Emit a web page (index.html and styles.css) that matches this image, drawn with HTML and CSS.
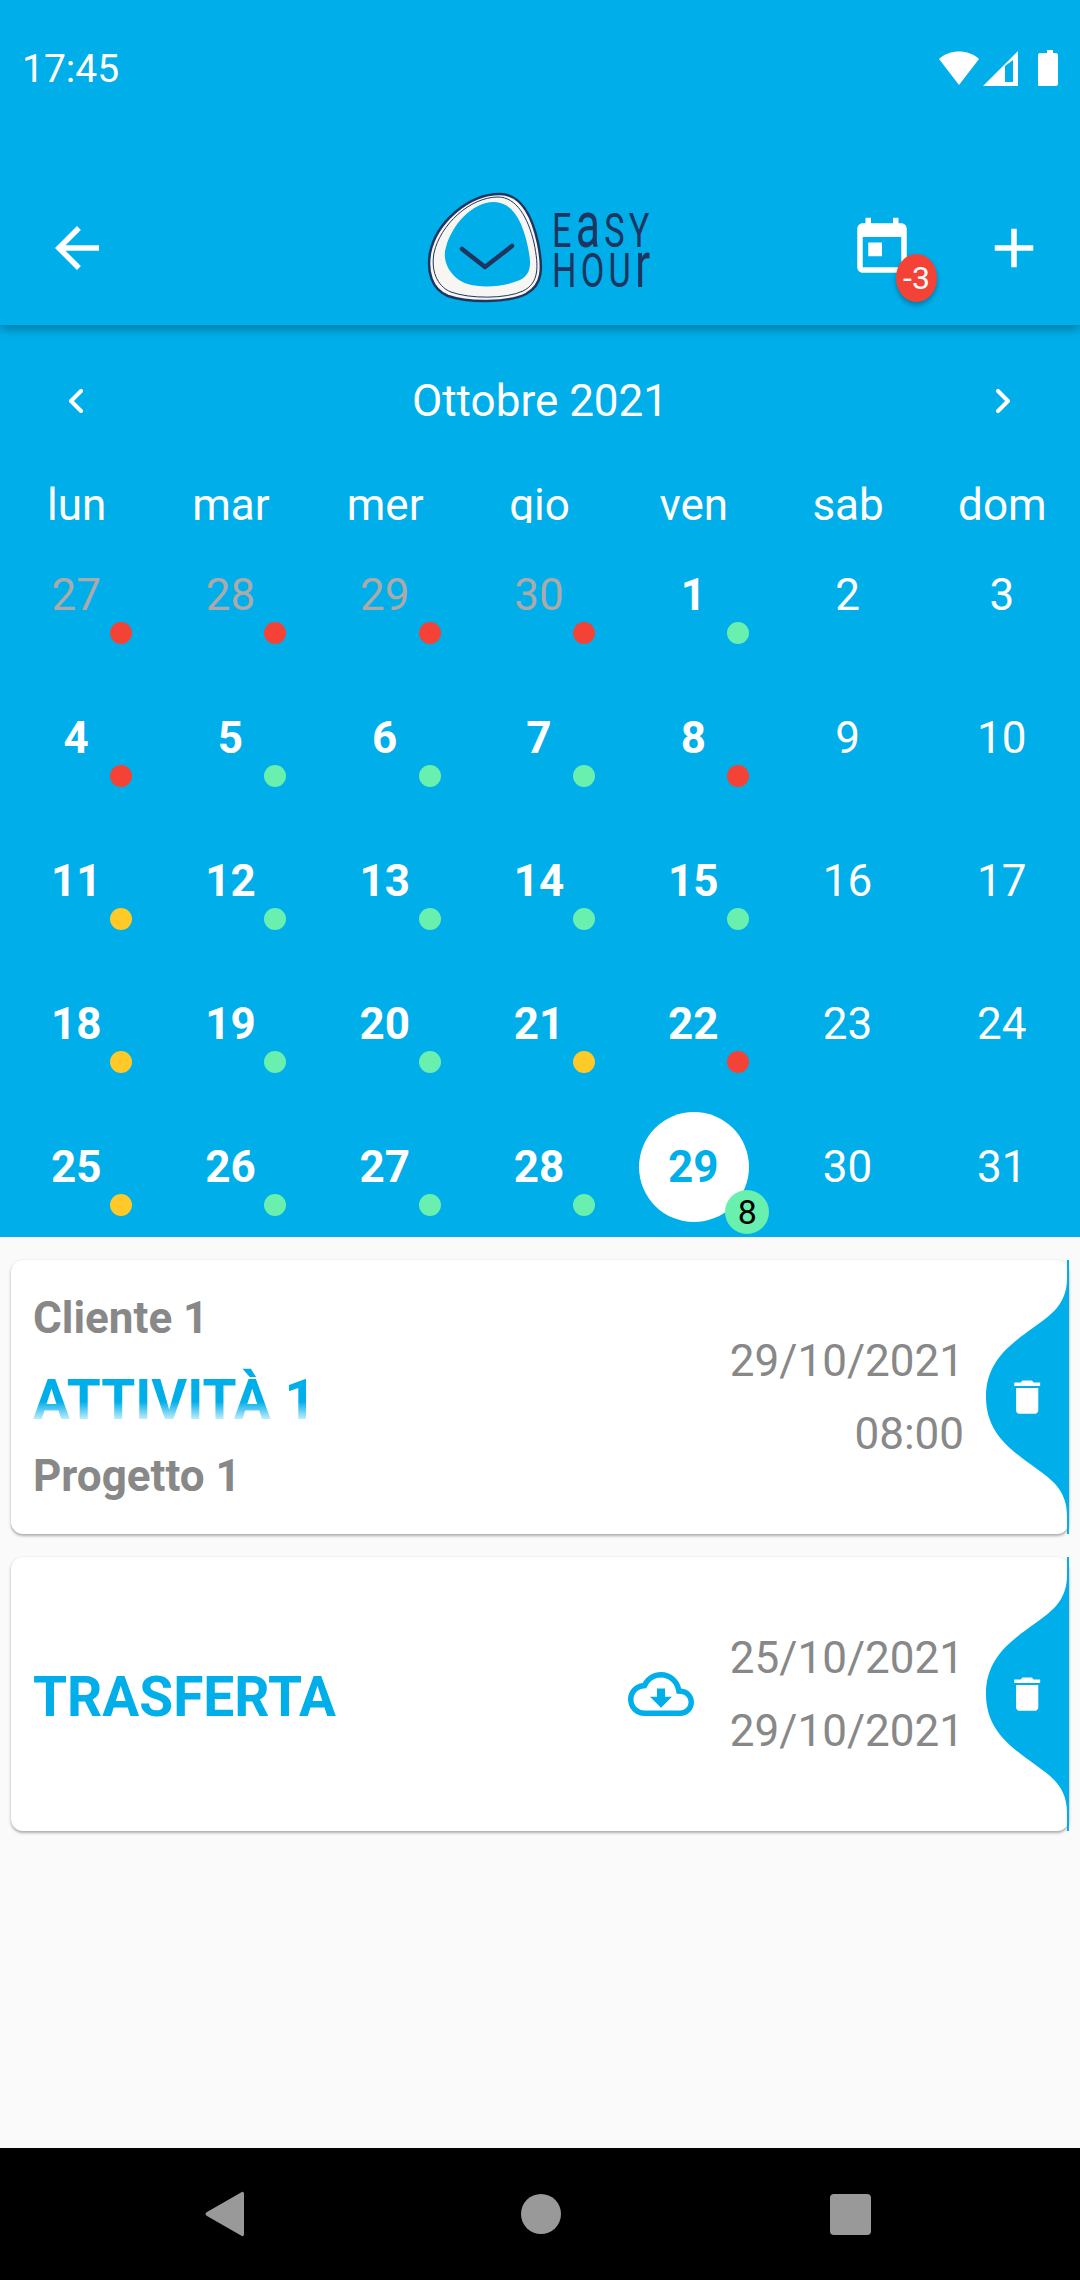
FILE: index.html
```html
<!DOCTYPE html>
<html lang="it">
  <head>
    <meta charset="UTF-8" />
    <meta name="viewport" content="width=device-width, initial-scale=1.0" />
    <title>Easy Hour</title>
    <link rel="stylesheet" href="styles.css">
  </head>
  <body>
    <header class="Header">
      <div class="StatusBar">
        <span class="StatusTime">17:45</span>
        <svg class="StatusIcons" width="120" height="36" viewBox="0 0 120 36">
          <path d="M0 9C10 -1 30 -1 40 9L20 35Z" fill="#fff" />
          <path fill-rule="evenodd" d="M79 1V36H44ZM66 16V32H74V10Z" fill="#fff" />
          <path d="M105 3H108V0H114V3H117C118 3 119 4 119 5V34C119 35 118 36 117 36H100C99 36 99 35 99 34V5C99 4 100 3 101 3Z" fill="#fff" />
        </svg>
      </div>
      <div class="Toolbar">
        <svg class="ToolIcon ToolBack" viewBox="0 0 24 24">
          <path d="M20 11H7.83l5.59-5.59L12 4l-8 8 8 8 1.41-1.41L7.83 13H20v-2z" />
        </svg>
        <svg class="Logo" width="224" height="110" viewBox="0 0 224 110">
          <path class="LogoEgg" d="M72 1C92 1 104 22 110 50C115 75 115 92 98 101C80 110 40 110 20 103C3 96 -1 78 2 60C8 30 40 1 72 1Z" />
          <path class="LogoLine" d="M70 4C88 4 100 24 106 50C111 74 111 90 95 98C78 106 42 106 23 99C8 93 3 76 6 60C12 32 42 4 70 4Z" />
          <path class="LogoFace" d="M66 9C84 9 94 28 99 50C103 68 105 80 92 87C76 94 46 97 31 87C20 79 14 66 18 54C24 32 44 9 66 9Z" />
          <path class="LogoCheck" d="M34 56L57 74L84 53" />
          <text class="LogoText" transform="translate(124 54) scale(.7 1)">E<tspan class="LogoLower">a</tspan>SY</text>
          <text class="LogoText" transform="translate(124 94) scale(.7 1)">HOU<tspan class="LogoLower">r</tspan></text>
        </svg>
        <div class="ToolRight">
          <div class="TodayBtn">
            <svg class="ToolIcon" viewBox="0 0 24 24">
              <path d="M19 3h-1V1h-2v2H8V1H6v2H5c-1.11 0-1.99.9-1.99 2L3 19c0 1.1.89 2 2 2h14c1.1 0 2-.9 2-2V5c0-1.1-.9-2-2-2zm0 16H5V8h14v11zM7 10h5v5H7z" />
            </svg>
            <span class="TodayBadge">-3</span>
          </div>
          <svg class="ToolIcon" viewBox="0 0 24 24">
            <path d="M19 13h-6v6h-2v-6H5v-2h6V5h2v6h6v2z" />
          </svg>
        </div>
      </div>
    </header>

    <section class="Calendar">
      <div class="MonthRow">
        <svg class="Chevron" width="154" height="24" viewBox="0 0 154 24"><path d="M81 2L71 12L81 22" /></svg>
        <span class="MonthName">Ottobre 2021</span>
        <svg class="Chevron" width="154" height="24" viewBox="0 0 154 24"><path d="M72 2L82 12L72 22" /></svg>
      </div>
      <div class="WeekRow">
        <span>lun</span><span>mar</span><span>mer</span><span>gio</span><span>ven</span><span>sab</span><span>dom</span>
      </div>
      <div class="DayGrid">
        <div class="Day Muted"><span class="Num">27</span><i class="Dot Red"></i></div>
        <div class="Day Muted"><span class="Num">28</span><i class="Dot Red"></i></div>
        <div class="Day Muted"><span class="Num">29</span><i class="Dot Red"></i></div>
        <div class="Day Muted"><span class="Num">30</span><i class="Dot Red"></i></div>
        <div class="Day Work"><span class="Num">1</span><i class="Dot Green"></i></div>
        <div class="Day"><span class="Num">2</span></div>
        <div class="Day"><span class="Num">3</span></div>

        <div class="Day Work"><span class="Num">4</span><i class="Dot Red"></i></div>
        <div class="Day Work"><span class="Num">5</span><i class="Dot Green"></i></div>
        <div class="Day Work"><span class="Num">6</span><i class="Dot Green"></i></div>
        <div class="Day Work"><span class="Num">7</span><i class="Dot Green"></i></div>
        <div class="Day Work"><span class="Num">8</span><i class="Dot Red"></i></div>
        <div class="Day"><span class="Num">9</span></div>
        <div class="Day"><span class="Num">10</span></div>

        <div class="Day Work"><span class="Num">11</span><i class="Dot Yellow"></i></div>
        <div class="Day Work"><span class="Num">12</span><i class="Dot Green"></i></div>
        <div class="Day Work"><span class="Num">13</span><i class="Dot Green"></i></div>
        <div class="Day Work"><span class="Num">14</span><i class="Dot Green"></i></div>
        <div class="Day Work"><span class="Num">15</span><i class="Dot Green"></i></div>
        <div class="Day"><span class="Num">16</span></div>
        <div class="Day"><span class="Num">17</span></div>

        <div class="Day Work"><span class="Num">18</span><i class="Dot Yellow"></i></div>
        <div class="Day Work"><span class="Num">19</span><i class="Dot Green"></i></div>
        <div class="Day Work"><span class="Num">20</span><i class="Dot Green"></i></div>
        <div class="Day Work"><span class="Num">21</span><i class="Dot Yellow"></i></div>
        <div class="Day Work"><span class="Num">22</span><i class="Dot Red"></i></div>
        <div class="Day"><span class="Num">23</span></div>
        <div class="Day"><span class="Num">24</span></div>

        <div class="Day Work"><span class="Num">25</span><i class="Dot Yellow"></i></div>
        <div class="Day Work"><span class="Num">26</span><i class="Dot Green"></i></div>
        <div class="Day Work"><span class="Num">27</span><i class="Dot Green"></i></div>
        <div class="Day Work"><span class="Num">28</span><i class="Dot Green"></i></div>
        <div class="Day Work Selected"><span class="Num">29</span><b class="CountBadge">8</b></div>
        <div class="Day"><span class="Num">30</span></div>
        <div class="Day"><span class="Num">31</span></div>
      </div>
    </section>

    <main class="CardList">
      <article class="Card">
        <div class="CardMain">
          <p class="CardSub">Cliente 1</p>
          <p class="CardTitle Faded">ATTIVITÀ 1</p>
          <p class="CardSub">Progetto 1</p>
        </div>
        <div class="CardDates">
          <span>29/10/2021</span>
          <span>08:00</span>
        </div>
        <svg class="Wave" width="85" height="274" viewBox="0 0 85 274">
          <path d="M83 0V18C83 42 70 53 53 65C28 83 2 100 2 137C2 174 28 191 53 209C70 221 83 232 83 256V274H85V0Z" />
          <path class="Trash" transform="translate(21 115) scale(1.85)" d="M6 19c0 1.1.9 2 2 2h8c1.1 0 2-.9 2-2V7H6v12zM19 4h-3.5l-1-1h-5l-1 1H5v2h14V4z" />
        </svg>
      </article>

      <article class="Card">
        <div class="CardMain">
          <p class="CardTitle Solo">TRASFERTA</p>
        </div>
        <svg class="Cloud" width="66" height="66" viewBox="0 0 24 24">
          <path d="M19.35 10.04C18.67 6.59 15.64 4 12 4 9.11 4 6.6 5.64 5.35 8.04 2.34 8.36 0 10.91 0 14c0 3.31 2.69 6 6 6h13c2.76 0 5-2.24 5-5 0-2.64-2.05-4.78-4.65-4.96zM19 18H6c-2.21 0-4-1.79-4-4 0-2.05 1.53-3.76 3.56-3.97l1.07-.11.5-.95C8.08 7.14 9.94 6 12 6c2.62 0 4.88 1.86 5.39 4.43l.3 1.5 1.53.11c1.56.1 2.78 1.41 2.78 2.96 0 1.65-1.35 3-3 3zm-5.55-8h-2.9v3H8l4 4 4-4h-2.55z" />
        </svg>
        <div class="CardDates">
          <span>25/10/2021</span>
          <span>29/10/2021</span>
        </div>
        <svg class="Wave" width="85" height="274" viewBox="0 0 85 274">
          <path d="M83 0V18C83 42 70 53 53 65C28 83 2 100 2 137C2 174 28 191 53 209C70 221 83 232 83 256V274H85V0Z" />
          <path class="Trash" transform="translate(21 115) scale(1.85)" d="M6 19c0 1.1.9 2 2 2h8c1.1 0 2-.9 2-2V7H6v12zM19 4h-3.5l-1-1h-5l-1 1H5v2h14V4z" />
        </svg>
      </article>
    </main>

    <nav class="NavBar">
      <svg width="40" height="46" viewBox="0 0 40 46"><path d="M36 1.5C37.5 0 39 1 39 3V43C39 45 37.5 46 36 44.5L2 25C0 23.5 0 22.5 2 21Z" /></svg>
      <span class="NavHome"></span>
      <span class="NavRecent"></span>
    </nav>
  </body>
</html>
```

FILE: styles.css
```css
* {
  margin: 0;
  padding: 0;
  box-sizing: border-box;
}

body {
  width: 1080px;
  height: 2280px;
  overflow: hidden;
  display: flex;
  flex-direction: column;
  font-family: Roboto, "Noto Sans", sans-serif;
  background-color: #fafafa;
  color: #fff;
}

.Header {
  position: relative;
  z-index: 2;
  background-color: #00aeea;
  box-shadow: 0 4px 10px rgba(0, 0, 0, 0.3);
}

.StatusBar {
  height: 136px;
  display: flex;
  align-items: center;
  justify-content: space-between;
  padding: 0 21px 0 22px;
}

.StatusTime {
  font-size: 39px;
  padding-top: 2px;
}

.Toolbar {
  height: 189px;
  padding-top: 35px;
  display: grid;
  grid-template-columns: 1fr auto 1fr;
  align-items: center;
}

.ToolIcon {
  display: block;
  width: 66px;
  height: 66px;
  fill: #fff;
}

.ToolBack {
  margin-left: 44px;
}

.ToolRight {
  display: flex;
  justify-content: flex-end;
  gap: 66px;
  padding-right: 33px;
}

.TodayBtn {
  position: relative;
}

.TodayBadge {
  position: absolute;
  left: 47px;
  top: 39px;
  width: 41px;
  height: 48px;
  border-radius: 50%;
  background-color: #f44336;
  font-size: 32px;
  line-height: 48px;
  text-align: center;
  box-shadow: 0 3px 5px rgba(0, 0, 0, 0.3);
}

.Logo {
  display: block;
  overflow: visible;
}

.LogoEgg {
  fill: #f8f6f2;
  stroke: #1e3560;
  stroke-width: 2.5;
}

.LogoLine {
  fill: none;
  stroke: #1e3560;
  stroke-width: 1;
}

.LogoFace {
  fill: #00aeea;
}

.LogoCheck {
  fill: none;
  stroke: #1e3560;
  stroke-width: 4.5;
  stroke-linecap: round;
  stroke-linejoin: round;
}

.LogoText {
  font-family: Roboto, sans-serif;
  font-size: 49px;
  letter-spacing: 6px;
  fill: #1e3560;
}

.LogoLower {
  font-size: 64px;
}

.Calendar {
  background-color: #00aeea;
  height: 912px;
}

.MonthRow {
  height: 156px;
  padding-bottom: 4px;
  display: flex;
  align-items: center;
  justify-content: space-between;
}

.MonthName {
  font-size: 44px;
}

.Chevron {
  fill: none;
  stroke: #fff;
  stroke-width: 4;
  stroke-linecap: round;
  stroke-linejoin: round;
}

.WeekRow {
  height: 42px;
  display: grid;
  grid-template-columns: repeat(7, 1fr);
  font-size: 44px;
  line-height: 49px;
  text-align: center;
  overflow: hidden;
}

.WeekRow span {
  padding-right: 1px;
}

.DayGrid {
  display: grid;
  grid-template-columns: repeat(7, 1fr);
  grid-auto-rows: 143px;
}

.Day {
  position: relative;
  display: flex;
  align-items: center;
  justify-content: center;
  font-size: 44px;
}

.Num {
  width: 110px;
  height: 110px;
  padding-right: 2px;
  border-radius: 50%;
  display: flex;
  align-items: center;
  justify-content: center;
}

.Muted {
  color: #aaa;
}

.Work {
  font-weight: 700;
}

.Selected .Num {
  background-color: #fff;
  color: #00aeea;
}

.Dot {
  position: absolute;
  left: 50%;
  top: 50%;
  width: 22px;
  height: 22px;
  margin: 27px 0 0 33px;
  border-radius: 50%;
}

.Red {
  background-color: #f44336;
}

.Green {
  background-color: #69f0ae;
}

.Yellow {
  background-color: #ffca28;
}

.CountBadge {
  position: absolute;
  left: 50%;
  top: 50%;
  width: 44px;
  height: 44px;
  margin: 23px 0 0 31px;
  border-radius: 50%;
  background-color: #69f0ae;
  color: #000;
  font-size: 34px;
  font-weight: 400;
  line-height: 44px;
  text-align: center;
}

.CardList {
  flex: 1;
  display: flex;
  flex-direction: column;
  gap: 23px;
  padding: 23px 11px 0 11px;
}

.Card {
  height: 274px;
  display: flex;
  align-items: center;
  padding-left: 22px;
  background-color: #fff;
  border-radius: 12px;
  box-shadow: 0 2px 3px rgba(0, 0, 0, 0.3), 0 0 2px rgba(0, 0, 0, 0.08);
}

.CardMain {
  flex: 1;
}

.CardSub {
  font-size: 44px;
  font-weight: 700;
  line-height: 50px;
  color: #888;
}

.CardTitle {
  font-size: 55px;
  font-weight: 700;
  line-height: 80px;
  color: #00aeea;
}

.Faded {
  width: fit-content;
  background-image: linear-gradient(#00aeea 52%, #c0edfb 74%);
  -webkit-background-clip: text;
  background-clip: text;
  color: transparent;
  margin: 16px 0 12px 0;
  position: relative;
  top: 1px;
}

.Solo {
  padding-top: 6px;
}

.Cloud {
  fill: #00aeea;
  margin-right: 36px;
}

.CardDates {
  display: flex;
  flex-direction: column;
  align-items: flex-end;
  gap: 21px;
  margin-right: 20px;
  font-size: 44px;
  line-height: 52px;
  color: #888;
}

.Wave {
  flex-shrink: 0;
  fill: #00aeea;
}

.Wave .Trash {
  fill: #fff;
}

.NavBar {
  height: 132px;
  background-color: #000;
  display: flex;
  align-items: center;
  justify-content: space-between;
  padding: 0 209px 0 205px;
}

.NavBar svg {
  fill: #999;
}

.NavHome {
  width: 40px;
  height: 40px;
  margin-left: 6px;
  border-radius: 50%;
  background-color: #999;
}

.NavRecent {
  width: 41px;
  height: 41px;
  border-radius: 4px;
  background-color: #999;
}
```
